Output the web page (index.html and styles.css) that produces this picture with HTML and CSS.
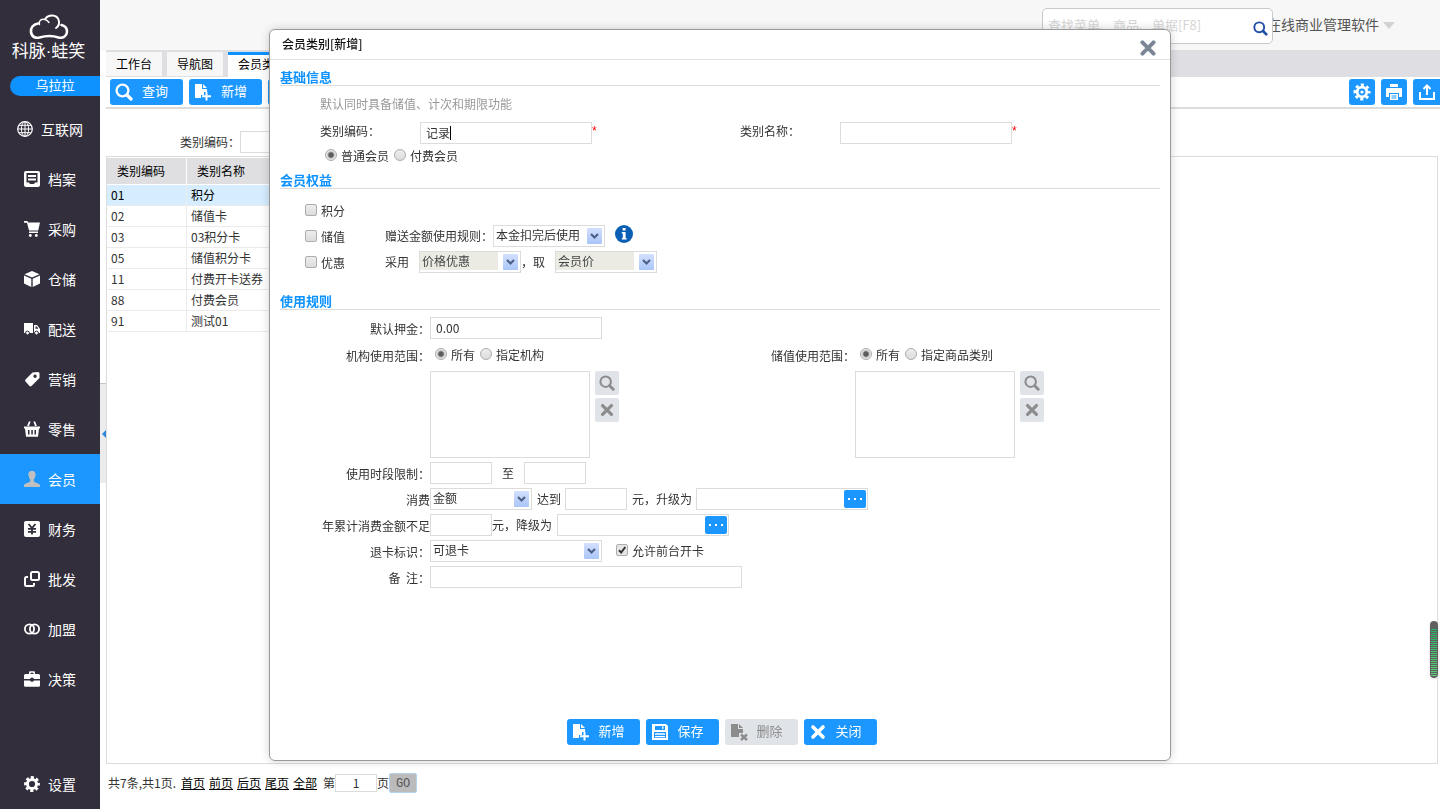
FILE: index.html
```html
<!DOCTYPE html>
<html lang="zh-CN">
<head>
<meta charset="utf-8">
<title>会员类别</title>
<link rel="stylesheet" href="styles.css">
</head>
<body>
<svg class="sprite" aria-hidden="true">
  <symbol id="i-search" viewBox="0 0 18 18"><circle cx="7.5" cy="7.5" r="5.9" fill="none" stroke="currentColor" stroke-width="2.3"/><path d="M12 12l4 4" stroke="currentColor" stroke-width="3.2" stroke-linecap="round"/></symbol>
  <symbol id="i-add" viewBox="0 0 18 18"><path d="M1 1h7v5h5v3h-3v3H7v3H1z M9 1l4 4H9z" fill="currentColor"/><path d="M8 13.2h9M12.5 8.8v8.8" stroke="currentColor" stroke-width="2"/></symbol>
  <symbol id="i-del" viewBox="0 0 18 18"><path d="M1 1h7v5h5v4H9v4H1z M9 1l4 4H9z" fill="currentColor"/><path d="M11 11.5l6 5.5M17 11.5l-6 5.5" stroke="currentColor" stroke-width="2.4"/></symbol>
  <symbol id="i-save" viewBox="0 0 18 18"><path fill-rule="evenodd" fill="currentColor" d="M1 1h14l2 2v14H1zM4 3v4h10V3zM3 9v6h12V9z"/><path d="M4 11h10M4 13.6h10M11.8 3.2v2.8" stroke="currentColor" stroke-width="1.3"/></symbol>
  <symbol id="i-x" viewBox="0 0 18 18"><path d="M4 4l10 10M14 4l-10 10" stroke="currentColor" stroke-width="3.6" stroke-linecap="round"/></symbol>
  <symbol id="i-gear" viewBox="0 0 16 16"><path fill="none" stroke="currentColor" stroke-width="3.4" stroke-dasharray="2.8 2.069" stroke-dashoffset="1.4" d="M14.2 8A6.2 6.2 0 1 1 14.2 7.99"/><circle cx="8" cy="8" r="4.6" fill="none" stroke="currentColor" stroke-width="3"/></symbol>
</svg>

<div class="app">
  <nav class="side">
    <div class="brand">
      <svg class="cloud" viewBox="0 0 40 26" fill="none" stroke="#fff" stroke-linecap="round"><path d="M9 9.5C4 10.5 1.5 14 2 18c.6 5 4.500 6.500 8.500 5.500 7-2 13-2 19 0 4.500 1.200 8.200-1.300 8.500-5.500.2-3.500-1.800-6-5.500-7" stroke-width="2.600"/><path d="M10.500 10.500C9.500 7 12 4.500 16 5.500c2 .5 3 1.500 4 3" stroke-width="1.400"/><path d="M16.500 4.500c3-4.500 11-4 13 1 1.200 3.500.5 6.500-2.500 8.500" stroke-width="2"/></svg>
      <span class="brand-name">科脉·蛙笑</span>
    </div>
    <div class="shop">乌拉拉</div>
    <ul class="menu">
      <li><a href="#"><svg viewBox="0 0 16 16" fill="none" stroke="#fff"><circle cx="8" cy="8" r="7.300" stroke-width="1.200"/><ellipse cx="8" cy="8" rx="3.600" ry="7.300"/><path d="M8 .7v14.600M.7 8h14.600M2 4.300h12M2 11.700h12"/></svg>互联网</a></li>
      <li><a href="#"><svg viewBox="0 0 16 16"><path fill="#fff" fill-rule="evenodd" d="M2 0h12q2 0 2 2v12q0 2-2 2H2q-2 0-2-2V2q0-2 2-2zm.5 2v9.500H5L6 13h4l1-1.500h2.500V2z"/><path d="M4 5h8M4 8.500h8" stroke="#fff" stroke-width="1.800"/></svg>档案</a></li>
      <li><a href="#"><svg viewBox="0 0 16 16"><path fill="#fff" d="M0 0h3.500l.6 1.500H16l-1.800 8H5L3 1.800H0zM5 10.500h9V12H5z"/><circle cx="6.300" cy="14.500" r="1.400" fill="#fff"/><circle cx="12.300" cy="14.500" r="1.400" fill="#fff"/></svg>采购</a></li>
      <li><a href="#"><svg viewBox="0 0 16 16" fill="#fff"><path d="M8 0l7.500 3.200L8 6.500.5 3.200zM0 4.500l7.300 3.200V16L0 12.500zM16 4.500L8.700 7.700V16l7.300-3.500z"/></svg>仓储</a></li>
      <li><a href="#"><svg viewBox="0 0 16 16"><path fill="#fff" d="M0 2h9v10H0zM10 4h3l3 4v4h-6z"/><path fill="#332e3b" d="M11.500 5.500h1.300l1.500 2.300h-2.800z"/><g fill="#fff" stroke="#332e3b"><circle cx="3.500" cy="12" r="1.900"/><circle cx="12.500" cy="12" r="1.900"/></g></svg>配送</a></li>
      <li><a href="#"><svg viewBox="0 0 16 16"><path fill="#fff" fill-rule="evenodd" d="M14 1q1.500 0 1.500 1.500V7L7.500 15q-1 .8-2 0l-4-4.500q-.8-1 0-2L8.500 1.500zm-3 2.500a1.700 1.700 0 1 0 .1 0z"/></svg>营销</a></li>
      <li><a href="#"><svg viewBox="0 0 16 16"><path fill="#fff" fill-rule="evenodd" d="M0 5.500h16v2h-1l-1 8.300H2L1 7.500H0zM4 9v4.500h1.500V9zM7.300 9v4.500h1.500V9zM10.500 9v4.500H12V9z"/><path d="M4 5L5.800.5M12 5L10.200.5" stroke="#fff" stroke-width="1.800"/></svg>零售</a></li>
      <li class="on"><a href="#"><svg viewBox="0 0 16 16"><path fill="#bfbfbf" d="M8 0c3 0 3.800 1.800 3.500 4.300-.2 2-1 3.200-1.700 4.200v2c1.200 1.200 5 1.500 6.200 3.500v2H0v-2c1.200-2 5-2.300 6.200-3.500v-2C5.500 7.500 4.700 6.300 4.500 4.300 4.200 1.800 5 0 8 0z"/></svg>会员</a></li>
      <li><a href="#"><svg viewBox="0 0 16 16"><rect width="16" height="16" rx="2" fill="#fff"/><path d="M4.500 3L8 7.200 11.500 3M8 7v6.500M4 7.800h8M4 10.800h8" stroke="#332e3b" stroke-width="1.800" fill="none"/></svg>财务</a></li>
      <li><a href="#"><svg viewBox="0 0 16 16" fill="none" stroke="#fff" stroke-width="2"><rect x="7" y="1" width="8" height="8" rx="1.500"/><path d="M4 6H2.500Q1 6 1 7.500v6Q1 15 2.500 15h6q1.500 0 1.500-1.500V12"/></svg>批发</a></li>
      <li><a href="#"><svg viewBox="0 0 16 16" fill="none" stroke="#fff" stroke-width="1.800"><circle cx="5.500" cy="8" r="4.600"/><circle cx="10.500" cy="8" r="4.600"/></svg>加盟</a></li>
      <li><a href="#"><svg viewBox="0 0 16 16"><path fill="#fff" fill-rule="evenodd" d="M5 3V1.500Q5 .3 6.200.3h3.600Q11 .3 11 1.500V3h3.500Q16 3 16 4.500V8h-6q-.3-1.500-2-1.500T6 8H0V4.500Q0 3 1.500 3zm1.500 0h3V1.800h-3zM0 9.500h6q.4 1.300 2 1.300t2-1.300h6v5q0 1.200-1.500 1.200h-13Q0 15.700 0 14.500z"/></svg>决策</a></li>
    </ul>
    <a class="setting" href="#"><svg><use href="#i-gear"/></svg>设置</a>
  </nav>

  <div class="main">
    <header class="top">
      <label class="finder">
        <input type="text" placeholder="查找菜单、商品、单据[F8]" aria-label="查找">
        <svg><use href="#i-search"/></svg>
      </label>
      <span class="product">在线商业管理软件</span>
      <span class="caret"></span>
    </header>
    <div class="work">
      <div class="splitter"><button aria-label="收起"><span></span></button></div>
      <div class="page">
        <div class="tabs">
          <a href="#">工作台</a><a href="#">导航图</a><a href="#" class="on">会员类别</a>
        </div>
        <div class="toolbar">
          <button class="btn"><svg><use href="#i-search"/></svg>查询</button>
          <button class="btn"><svg><use href="#i-add"/></svg>新增</button>
          <button class="btn"></button>
          <div class="tools">
            <button class="sq" aria-label="设置"><svg viewBox="0 0 18 18"><path fill="none" stroke="#fff" stroke-width="3" stroke-dasharray="2.900 2.597" stroke-dashoffset="1.450" d="M16 9A7 7 0 1 1 16 8.990"/><circle cx="9" cy="9" r="4.800" fill="none" stroke="#fff" stroke-width="2.800"/><circle cx="9" cy="9" r="1.600" fill="#fff"/></svg></button>
            <button class="sq" aria-label="打印"><svg viewBox="0 0 18 18"><path fill="#fff" fill-rule="evenodd" d="M5 1h8v3H5zM2 5h14q1 0 1 1v8h-3v-4H4v4H1V6q0-1 1-1zM5 11h8v6H5zm1.500 1.500v1h5v-1zm0 2v1h5v-1z"/></svg></button>
            <button class="sq last" aria-label="导出"><svg viewBox="0 0 18 18" fill="none" stroke="#fff" stroke-width="2"><path d="M2 9v7h14V9M9 12V3M5.500 6L9 2.500 12.500 6"/></svg></button>
          </div>
        </div>
        <div class="filter"><label for="q">类别编码：</label><input id="q" class="box" type="text"></div>
        <div class="panel">
          <table>
            <thead><tr><th>类别编码</th><th>类别名称</th></tr></thead>
            <tbody>
              <tr class="on"><td>01</td><td>积分</td></tr>
              <tr><td>02</td><td>储值卡</td></tr>
              <tr><td>03</td><td>03积分卡</td></tr>
              <tr><td>05</td><td>储值积分卡</td></tr>
              <tr><td>11</td><td>付费开卡送券</td></tr>
              <tr><td>88</td><td>付费会员</td></tr>
              <tr><td>91</td><td>测试01</td></tr>
            </tbody>
          </table>
          <span class="meter"></span>
        </div>
        <div class="pager">
          <span>共7条,共1页.</span>
          <a href="#">首页</a><a href="#">前页</a><a href="#">后页</a><a href="#">尾页</a><a href="#">全部</a>
          <label for="pg">第</label><input id="pg" type="text" value="1"><span class="unit">页</span><button>GO</button>
        </div>
      </div>
    </div>
  </div>
</div>

<div class="overlay">
  <form class="dialog" role="dialog" aria-labelledby="dt">
    <div class="dialog-head">
      <h1 id="dt">会员类别[新增]</h1>
      <button type="button" class="close" aria-label="关闭"><svg><use href="#i-x"/></svg></button>
    </div>
    <div class="dialog-body">
      <h2>基础信息</h2>
      <div class="basic">
        <p class="hint">默认同时具备储值、计次和期限功能</p>
        <div class="pair">
          <label for="code">类别编码：</label>
          <span class="field"><input id="code" class="box w-m" type="text" value="记录"><i class="cursor"></i><b class="req">*</b></span>
          <label for="name">类别名称：</label>
          <span class="field"><input id="name" class="box w-m" type="text"><b class="req">*</b></span>
        </div>
        <div class="opts">
          <label><input type="radio" name="kind" checked>普通会员</label>
          <label><input type="radio" name="kind">付费会员</label>
        </div>
      </div>

      <h2>会员权益</h2>
      <div class="rights">
        <div class="line"><label class="tick"><input type="checkbox">积分</label></div>
        <div class="line">
          <label class="tick"><input type="checkbox">储值</label>
          <label for="rule">赠送金额使用规则：</label>
          <select id="rule" class="w-rule"><option>本金扣完后使用</option></select>
          <svg class="info" viewBox="0 0 18 18"><circle cx="9" cy="9" r="9" fill="#0a5fb4"/><path d="M7.600 3h3v2.500h-3zM6.800 7h3.800v6h1v1.500H6.800V13h1V8.500h-1z" fill="#fff"/></svg>
        </div>
        <div class="line">
          <label class="tick"><input type="checkbox">优惠</label>
          <label for="use" class="gap">采用</label>
          <select id="use" class="w-s" disabled><option>价格优惠</option></select>
          <label for="take" class="gap">，取</label>
          <select id="take" class="w-s" disabled><option>会员价</option></select>
        </div>
      </div>

      <h2>使用规则</h2>
      <div class="rules">
        <div class="line"><label class="cap" for="dep">默认押金：</label><input id="dep" class="box w-m" type="text" value="0.00"></div>
        <div class="scope">
          <span class="cap">机构使用范围：</span>
          <div class="opts">
            <label><input type="radio" name="org" checked>所有</label>
            <label><input type="radio" name="org">指定机构</label>
          </div>
          <span class="cap">储值使用范围：</span>
          <div class="opts">
            <label><input type="radio" name="goods" checked>所有</label>
            <label><input type="radio" name="goods">指定商品类别</label>
          </div>
          <div class="pick">
            <textarea aria-label="机构使用范围"></textarea>
            <div class="pick-btns"><button type="button" aria-label="选择"><svg><use href="#i-search"/></svg></button><button type="button" aria-label="清除"><svg><use href="#i-x"/></svg></button></div>
          </div>
          <div class="pick">
            <textarea aria-label="储值使用范围"></textarea>
            <div class="pick-btns"><button type="button" aria-label="选择"><svg><use href="#i-search"/></svg></button><button type="button" aria-label="清除"><svg><use href="#i-x"/></svg></button></div>
          </div>
        </div>
        <div class="line">
          <label class="cap" for="t1">使用时段限制：</label><input id="t1" class="box w-xs" type="text">
          <label class="mid" for="t2">至</label><input id="t2" class="box w-xs" type="text">
        </div>
        <div class="line">
          <label class="cap" for="by">消费</label><select id="by" class="w-s"><option>金额</option></select>
          <label class="near" for="up">达到</label><input id="up" class="box w-xs" type="text">
          <label class="near" for="upto">元，升级为</label>
          <span class="field"><input id="upto" class="box w-m" type="text"><button type="button" class="more" aria-label="选择"><i></i><i></i><i></i></button></span>
        </div>
        <div class="line">
          <label class="cap" for="low">年累计消费金额不足</label><input id="low" class="box w-xs" type="text">
          <label class="tight" for="downto">元，降级为</label>
          <span class="field"><input id="downto" class="box w-m" type="text"><button type="button" class="more" aria-label="选择"><i></i><i></i><i></i></button></span>
        </div>
        <div class="line">
          <label class="cap" for="ret">退卡标识：</label><select id="ret" class="w-m"><option>可退卡</option></select>
          <label class="allow"><input type="checkbox" checked>允许前台开卡</label>
        </div>
        <div class="line"><label class="cap" for="memo">备&nbsp;&nbsp;注：</label><input id="memo" class="box w-l" type="text"></div>
      </div>
    </div>
    <div class="dialog-foot">
      <button type="button" class="btn"><svg><use href="#i-add"/></svg>新增</button>
      <button type="button" class="btn"><svg><use href="#i-save"/></svg>保存</button>
      <button type="button" class="btn" disabled><svg><use href="#i-del"/></svg>删除</button>
      <button type="button" class="btn"><svg><use href="#i-x"/></svg>关闭</button>
    </div>
  </form>
</div>
</body>
</html>
```

FILE: styles.css
```css
* { box-sizing: border-box; }
body {
  margin: 0;
  font: 12px/18px "Noto Sans CJK SC", "Liberation Sans", sans-serif;
  color: #333;
  background: #fff;
}
button, input, select, textarea { font: inherit; color: inherit; margin: 0; }
button { border: 0; padding: 0; cursor: pointer; }
a { color: inherit; text-decoration: none; }
ul, p, h1, h2 { margin: 0; padding: 0; list-style: none; }
.sprite { display: none; }

.app { display: flex; height: 100vh; }

/* sidebar */
.side {
  flex: none;
  width: 100px;
  display: flex;
  flex-direction: column;
  background: #332e3b;
  color: #fff;
  font-size: 14px;
}
.brand { display: flex; flex-direction: column; align-items: center; padding: 14px 3px 0 0; }
.cloud { width: 40px; height: 26px; }
.brand-name { font-family: "Liberation Sans", "Noto Sans CJK SC", sans-serif; font-size: 17px; line-height: 24px; white-space: nowrap; }
.shop {
  margin: 12px 0 8px 10px;
  border-radius: 10px 0 0 10px;
  background: #0d92ff;
  font-size: 13px;
  line-height: 18px;
  padding-bottom: 2px;
  text-align: center;
}
.menu a, .setting {
  display: flex;
  align-items: center;
  justify-content: center;
  gap: 8px;
  height: 50px;
  line-height: 20px;
}
.menu svg, .setting svg { width: 16px; height: 16px; }
.menu .on { background: #1c97ff; }
.setting { margin-top: auto; }

/* header */
.main { flex: 1; min-width: 0; display: flex; flex-direction: column; }
.top {
  height: 50px;
  flex: none;
  display: flex;
  align-items: center;
  justify-content: flex-end;
  padding-right: 45px;
  background: #f7f7f7;
  color: #555;
  font-size: 14px;
}
.finder {
  position: relative;
  z-index: 1;
  display: flex;
  align-items: center;
  width: 231px;
  height: 36px;
  margin-top: 2px;
  padding: 0 4px 0 5px;
  border: 1px solid #c9c9c9;
  border-radius: 5px;
  background: #fff;
}
.finder input { flex: 1; min-width: 0; border: 0; padding: 0 0 2px; outline: 0; background: none; font-size: 13px; }
.finder input::placeholder { color: #d5d5d5; opacity: 1; }
.finder svg { width: 15px; height: 15px; color: #1f4fa5; margin-top: 4px; }
.product { margin: 0 0 2px -6px; }
.caret { margin-left: 4px; border: 6px solid transparent; border-top: 7px solid #d2d2d2; border-bottom: 0; }

/* work area */
.work { flex: 1; min-height: 0; display: flex; }
.splitter { width: 6px; display: flex; flex-direction: column; justify-content: center; padding-top: 7px; }
.splitter button {
  height: 100px;
  display: flex;
  align-items: center;
  justify-content: flex-end;
  background: #ececec;
  border-top: 1px solid #c4c4c4;
}
.splitter span { border: 4px solid transparent; border-right-color: #2e86d8; border-left: 0; }
.page { flex: 1; min-width: 0; display: flex; flex-direction: column; }

.tabs { display: flex; gap: 5px; height: 27px; padding-top: 2px; background: #dfdee3; color: #000; }
.tabs a { height: 24px; padding: 0 10px; line-height: 24px; background: #f7f7f7; }
.tabs .on { height: 25px; background: #fff; border-top: 3px solid #0d92ff; line-height: 18px; }

.toolbar { display: flex; gap: 6px; padding: 2px 0 2px 4px; border-bottom: 2px solid #dcdcdc; }
.tools { display: flex; gap: 6px; margin-left: auto; }
.btn {
  display: flex;
  align-items: center;
  gap: 9px;
  width: 73px;
  height: 26px;
  padding: 0 0 2px 5px;
  border-radius: 3px;
  background: #1c97ff;
  color: #fff;
  font-size: 13px;
}
.btn svg { width: 18px; height: 18px; margin-top: 2px; }
.btn:disabled { background: #e0e3e8; color: #8c8c8c; }
.sq { display: grid; place-items: center; width: 26px; height: 26px; border-radius: 3px; background: #1c97ff; }
.sq svg { width: 18px; height: 18px; }
.sq.last { width: 27px; border-radius: 3px 0 0 3px; }

.filter { display: flex; align-items: center; padding: 22px 0 3px 74px; }
.box { height: 22px; padding: 0 5px 2px; border: 1px solid #dcdcdc; background: #fff; outline: 0; border-radius: 0; }

.panel { position: relative; flex: 1; margin-right: 2px; padding-top: 1px; border: 1px solid #dcdcdc; }
table { width: 720px; border-collapse: separate; border-spacing: 0; table-layout: fixed; }
th { height: 27px; padding: 0 10px; background: #dfdfe2; border-right: 1px solid #fff; border-bottom: 1px solid #fff; font-weight: 400; text-align: left; color: #000; }
td { height: 21px; padding: 0 4px; border-right: 1px solid #ebebeb; border-bottom: 1px solid #ebebeb; line-height: 20px; }
th:first-child { width: 80px; }
tr.on td { background: #d5edfe; color: #000; }
.meter {
  position: absolute;
  right: -1px;
  bottom: 85px;
  width: 8px;
  height: 57px;
  border: 1px solid #606060;
  border-top-width: 8px;
  border-radius: 4px;
  background:
    repeating-linear-gradient(transparent 0 1px, #606060 1px 2px),
    linear-gradient(#25b562, #62d47c);
  box-shadow: 0 1px 3px #ddd;
}

.pager { display: flex; align-items: center; height: 45px; padding: 0 0 7px 2px; }
.pager a { margin-right: 4px; color: #000; text-decoration: underline; }
.pager span:first-child { margin-right: 5px; }
.pager label { margin-left: 2px; }
.pager input { width: 42px; height: 18px; padding: 0; border: 1px solid #dcdcdc; text-align: center; }
.pager button { width: 28px; height: 20px; padding-top: 2px; border: 1px solid #b3d3ee; border-radius: 2px; background: #bbb; color: #555; font: 12px/16px "Liberation Mono", monospace; }

/* dialog */
.overlay { position: fixed; inset: 0; z-index: 10; display: flex; justify-content: center; padding: 29px 0 48px; }
.dialog {
  width: 902px;
  display: flex;
  flex-direction: column;
  border: 1px solid #999;
  border-radius: 6px;
  background: #fff;
  box-shadow: 0 0 10px rgba(0, 0, 0, .18);
}
.dialog-head { display: flex; justify-content: space-between; height: 30px; padding: 5px 12px 0; border-bottom: 1px solid #e3e3e3; }
h1 { font-size: 12px; line-height: 17px; font-weight: 500; color: #111; }
.close { width: 20px; height: 20px; margin-top: 3px; background: none; color: #7b8794; }
.close svg { width: 20px; height: 20px; display: block; }
.dialog-body { flex: 1; padding: 8px 10px 0; }
h2 { height: 18px; border-bottom: 1px solid #dcdcdc; font-size: 13px; line-height: 17px; font-weight: 700; color: #0d92ff; }

.basic { padding: 9px 0 3px 40px; }
.hint { margin-bottom: 9px; color: #999; }
.pair { display: grid; grid-template-columns: 100px 320px 100px auto; }
.field { position: relative; display: flex; }
.req { color: #f00; font-family: "Liberation Sans", sans-serif; font-weight: 400; line-height: 18px; }
.cursor { position: absolute; left: 30px; top: 4px; width: 1px; height: 14px; background: #000; }
.opts { display: flex; align-items: center; gap: 5px; height: 24px; padding-left: 5px; }
.opts label, .tick, .allow { display: flex; align-items: center; gap: 4px; }

input[type="radio"], input[type="checkbox"] {
  appearance: none;
  flex: none;
  width: 12px;
  height: 12px;
  margin-bottom: 3px;
  border: 1px solid #adadad;
  border-radius: 2px;
  background: linear-gradient(#ededed, #dcdcdc);
}
input[type="radio"] { border-radius: 50%; }
input[type="radio"]:checked { background: radial-gradient(circle, #5c5c5c 0 2px, #e6e6e6 4px); }
input[type="checkbox"]:checked {
  background: url("data:image/svg+xml,%3Csvg xmlns='http://www.w3.org/2000/svg' viewBox='0 0 10 10'%3E%3Cpath d='M2 5.200l2.200 2.300L8.300 2' fill='none' stroke='%23333' stroke-width='2'/%3E%3C/svg%3E") center / 10px 10px no-repeat, #e6e6e6;
}

.rights { display: grid; gap: 4px; padding: 10px 0 19px 25px; }
.line { display: flex; align-items: center; min-height: 22px; }
.tick { width: 80px; padding-top: 2px; }
.gap { margin-right: 10px; }
.info { width: 18px; height: 18px; margin-left: 10px; margin-bottom: 4px; }

select {
  appearance: none;
  height: 22px;
  padding: 0 20px 2px 2px;
  border: 1px solid #dcdcdc;
  border-radius: 0;
  outline: 0;
  background: url("data:image/svg+xml,%3Csvg xmlns='http://www.w3.org/2000/svg' viewBox='0 0 15 16'%3E%3ClinearGradient id='g' x2='0' y2='1'%3E%3Cstop stop-color='%23d3e0ff'/%3E%3Cstop offset='1' stop-color='%23aac5f8'/%3E%3C/linearGradient%3E%3Crect width='15' height='16' rx='1' fill='url(%23g)'/%3E%3Cpath d='M4 6l3.500 3.500L11 6' fill='none' stroke='%234d6185' stroke-width='2.200'/%3E%3C/svg%3E") right 2px top 2px / 15px 16px no-repeat, #fff;
}
select:disabled {
  opacity: 1;
  color: #444;
  background:
    url("data:image/svg+xml,%3Csvg xmlns='http://www.w3.org/2000/svg' viewBox='0 0 15 16'%3E%3ClinearGradient id='g' x2='0' y2='1'%3E%3Cstop stop-color='%23d3e0ff'/%3E%3Cstop offset='1' stop-color='%23aac5f8'/%3E%3C/linearGradient%3E%3Crect width='15' height='16' rx='1' fill='url(%23g)'/%3E%3Cpath d='M4 6l3.500 3.500L11 6' fill='none' stroke='%234d6185' stroke-width='2.200'/%3E%3C/svg%3E") right 2px top 2px / 15px 16px no-repeat,
    linear-gradient(#ebebe4, #ebebe4) 0 0 / 78px 18px no-repeat,
    #fff;
}
.w-xs { width: 62px; }
.w-s { width: 102px; }
.w-rule { width: 112px; }
.w-m { width: 172px; }
.w-l { width: 312px; }

.rules { display: grid; gap: 4px; padding-top: 7px; }
.cap { width: 150px; padding-top: 2px; text-align: right; white-space: nowrap; }
.scope { display: grid; grid-template-columns: 150px 275px 150px auto; gap: 4px 0; align-items: center; }
.pick { display: flex; gap: 5px; grid-column: 2; }
.pick:last-child { grid-column: 4; grid-row: 2; }
textarea { display: block; width: 160px; height: 87px; border: 1px solid #dcdcdc; outline: 0; resize: none; }
.pick-btns { display: flex; flex-direction: column; gap: 3px; }
.pick-btns button { display: grid; place-items: center; width: 24px; height: 24px; border-radius: 2px; background: #e0e3e8; color: #8c8c8c; }
.pick-btns svg { width: 16px; height: 16px; }
.mid { padding: 0 10px; }
.near { padding: 0 4px 0 5px; }
.tight { padding-right: 5px; }
.allow { margin-left: 14px; }
.more { position: absolute; right: 2px; top: 2px; display: flex; align-items: center; justify-content: center; gap: 4px; width: 22px; height: 18px; border-radius: 2px; background: #1c97ff; }
.more i { width: 2px; height: 2px; background: #fff; }

.dialog-foot { display: flex; justify-content: center; gap: 6px; padding: 0 0 15px 3px; }
```
